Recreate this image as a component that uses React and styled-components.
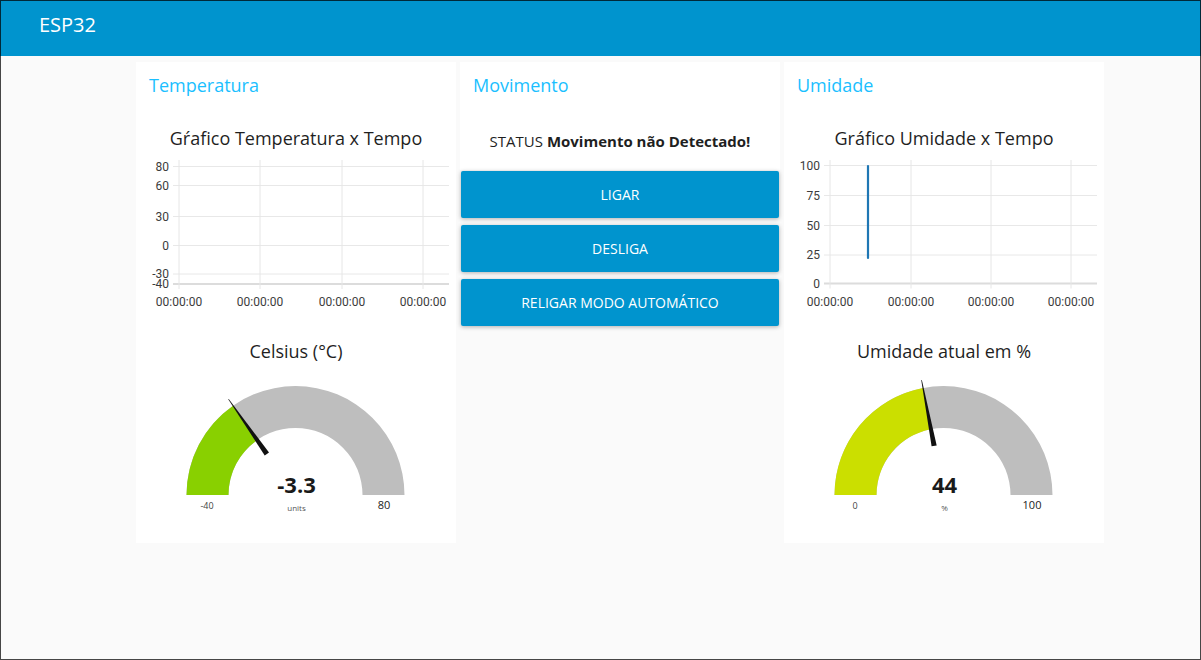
import React from 'react';
import styled, { createGlobalStyle } from 'styled-components';

const GlobalStyle = createGlobalStyle`
  html, body {
    margin: 0;
    padding: 0;
    background: #fafafa;
  }
  body {
    font-family: "Open Sans", "Noto Sans", sans-serif;
    color: #1f1f1f;
  }
`;

const Frame = styled.div`
  position: relative;
  width: 1201px;
  height: 660px;
  box-sizing: border-box;
  background: #fafafa;
  display: flex;
  flex-direction: column;
  overflow: hidden;

  &::after {
    content: '';
    position: absolute;
    inset: 0;
    border: 1px solid rgba(0, 0, 0, 0.72);
    pointer-events: none;
  }
`;

const Header = styled.header`
  height: 56px;
  flex: none;
  background: #0094ce;
  color: #fff;
  box-sizing: border-box;
  padding: 12px 0 0 39px;
  font-size: 20px;
  line-height: 26px;
`;

const Main = styled.main`
  display: flex;
  align-items: flex-start;
  gap: 4px;
  padding: 6px 0 0 136px;
`;

const Column = styled.div`
  width: 320px;
  display: flex;
  flex-direction: column;
`;

const Card = styled.section`
  background: #fff;
  height: ${p => p.$height}px;
  display: flex;
  flex-direction: column;
`;

const GroupTitle = styled.div`
  height: 46px;
  line-height: 46px;
  padding: 0 13px;
  font-size: 18px;
  color: #1bbfff;
`;

const WidgetTitle = styled.div`
  padding-top: ${p => p.$top}px;
  line-height: 23px;
  font-size: 18px;
  text-align: center;
  color: #1f1f1f;
`;

const Status = styled.div`
  padding-top: 21px;
  line-height: 24px;
  font-size: 15px;
  text-align: center;
  color: #1f1f1f;

  b {
    font-weight: 700;
  }
`;

const ButtonStack = styled.div`
  display: flex;
  flex-direction: column;
  gap: 7px;
  padding: 1px 1px 0;
`;

const ActionButton = styled.button`
  height: 47px;
  border: none;
  border-radius: 2px;
  background: #0094ce;
  color: #fff;
  font-family: inherit;
  font-size: 14px;
  text-transform: uppercase;
  box-shadow: 0 1px 4px rgba(0, 0, 0, 0.3);
  cursor: pointer;
`;

const ChartSvg = styled.svg`
  display: block;
  font-family: Roboto, "Liberation Sans", sans-serif;
  font-size: 12px;
`;

const GaugeSvg = styled.svg`
  display: block;
  font-family: "Open Sans", "Noto Sans", sans-serif;
`;

function LineChart({ xs, ticks, right = 313, top = 10, bottom, line }) {
  const left = xs[0];
  return (
    <ChartSvg width="320" height="164" viewBox="0 0 320 164">
      {ticks.map(t => (
        <g key={t.label}>
          <line x1={left - 6} x2={right} y1={t.y} y2={t.y} stroke="#e8e8e8" strokeWidth="1" />
          <text x={left - 10} y={t.y + 4} textAnchor="end" fill="#3c3c3c">{t.label}</text>
        </g>
      ))}
      <line x1={left - 6} x2={right} y1={bottom} y2={bottom} stroke="#dcdcdc" strokeWidth="2" />
      {xs.map(x => (
        <g key={x}>
          <line x1={x} x2={x} y1={top} y2={bottom + 5} stroke="#e6e6e6" strokeWidth="1" />
          <text x={x} y={156} textAnchor="middle" fill="#3c3c3c">00:00:00</text>
        </g>
      ))}
      {line && (
        <line x1={line.x} x2={line.x} y1={line.y1} y2={line.y2} stroke="#1f77b4" strokeWidth="2.2" strokeLinecap="round" />
      )}
    </ChartSvg>
  );
}

function Gauge({ value, min, max, color, unit }) {
  const cx = 159.5, cy = 132, R = 109, r = 67;
  const frac = (value - min) / (max - min);
  const a = Math.PI * frac;
  const dx = -Math.cos(a), dy = -Math.sin(a);
  const nx = -dy, ny = dx;
  const pt = rad => `${(cx + dx * rad).toFixed(2)} ${(cy + dy * rad).toFixed(2)}`;
  const bg = `M ${cx - R} ${cy} A ${R} ${R} 0 0 1 ${cx + R} ${cy} L ${cx + r} ${cy} A ${r} ${r} 0 0 0 ${cx - r} ${cy} Z`;
  const fg = `M ${cx - R} ${cy} A ${R} ${R} 0 0 1 ${pt(R)} L ${pt(r)} A ${r} ${r} 0 0 0 ${cx - r} ${cy} Z`;
  const b = 50, t = 117, w = 2.6;
  const needle = [
    [cx + dx * b + nx * w, cy + dy * b + ny * w],
    [cx + dx * t + nx * 0.3, cy + dy * t + ny * 0.3],
    [cx + dx * t - nx * 0.3, cy + dy * t - ny * 0.3],
    [cx + dx * b - nx * w, cy + dy * b - ny * w],
  ].map(p => p.map(v => v.toFixed(2)).join(',')).join(' ');

  return (
    <GaugeSvg width="320" height="170" viewBox="0 0 320 170">
      <path d={bg} fill="#bebebe" />
      <path d={fg} fill={color} />
      <polygon points={needle} fill="#111" />
      <text x={cx + 1} y={cy - 2} textAnchor="middle" fontSize="22" fontWeight="700" fill="#1a1a1a">{value}</text>
      <text x={cx + 1} y={cy + 16} textAnchor="middle" fontSize="8" fill="#555">{unit}</text>
      <text x={71} y={cy + 14} textAnchor="middle" fontSize="9" fill="#444">{min}</text>
      <text x={248} y={cy + 14} textAnchor="middle" fontSize="11" fill="#222">{max}</text>
    </GaugeSvg>
  );
}

export default function App() {
  return (
    <>
      <GlobalStyle />
      <Frame>
        <Header>ESP32</Header>
        <Main>
          <Column>
            <Card $height={481}>
              <GroupTitle>Temperatura</GroupTitle>
              <WidgetTitle $top={19}>Gŕafico Temperatura x Tempo</WidgetTitle>
              <LineChart
                xs={[43, 124, 206, 287]}
                bottom={134}
                ticks={[
                  { label: '80', y: 16.5 },
                  { label: '60', y: 35.5 },
                  { label: '30', y: 66.5 },
                  { label: '0', y: 95.5 },
                  { label: '-30', y: 124 },
                  { label: '-40', y: 134 },
                ]}
              />
              <WidgetTitle $top={26}>Celsius (°C)</WidgetTitle>
              <Gauge value={-3.3} min={-40} max={80} color="#89d000" unit="units" />
            </Card>
          </Column>

          <Column>
            <Card $height={108}>
              <GroupTitle>Movimento</GroupTitle>
              <Status>STATUS <b>Movimento não Detectado!</b></Status>
            </Card>
            <ButtonStack>
              <ActionButton>Ligar</ActionButton>
              <ActionButton>Desliga</ActionButton>
              <ActionButton>Religar modo automático</ActionButton>
            </ButtonStack>
          </Column>

          <Column>
            <Card $height={481}>
              <GroupTitle>Umidade</GroupTitle>
              <WidgetTitle $top={19}>Gráfico Umidade x Tempo</WidgetTitle>
              <LineChart
                xs={[46, 127, 207, 287]}
                bottom={133.5}
                line={{ x: 84, y1: 16, y2: 108 }}
                ticks={[
                  { label: '100', y: 15.5 },
                  { label: '75', y: 45.5 },
                  { label: '50', y: 75.5 },
                  { label: '25', y: 105 },
                  { label: '0', y: 133.5 },
                ]}
              />
              <WidgetTitle $top={26}>Umidade atual em %</WidgetTitle>
              <Gauge value={44} min={0} max={100} color="#cbdf00" unit="%" />
            </Card>
          </Column>
        </Main>
      </Frame>
    </>
  );
}
